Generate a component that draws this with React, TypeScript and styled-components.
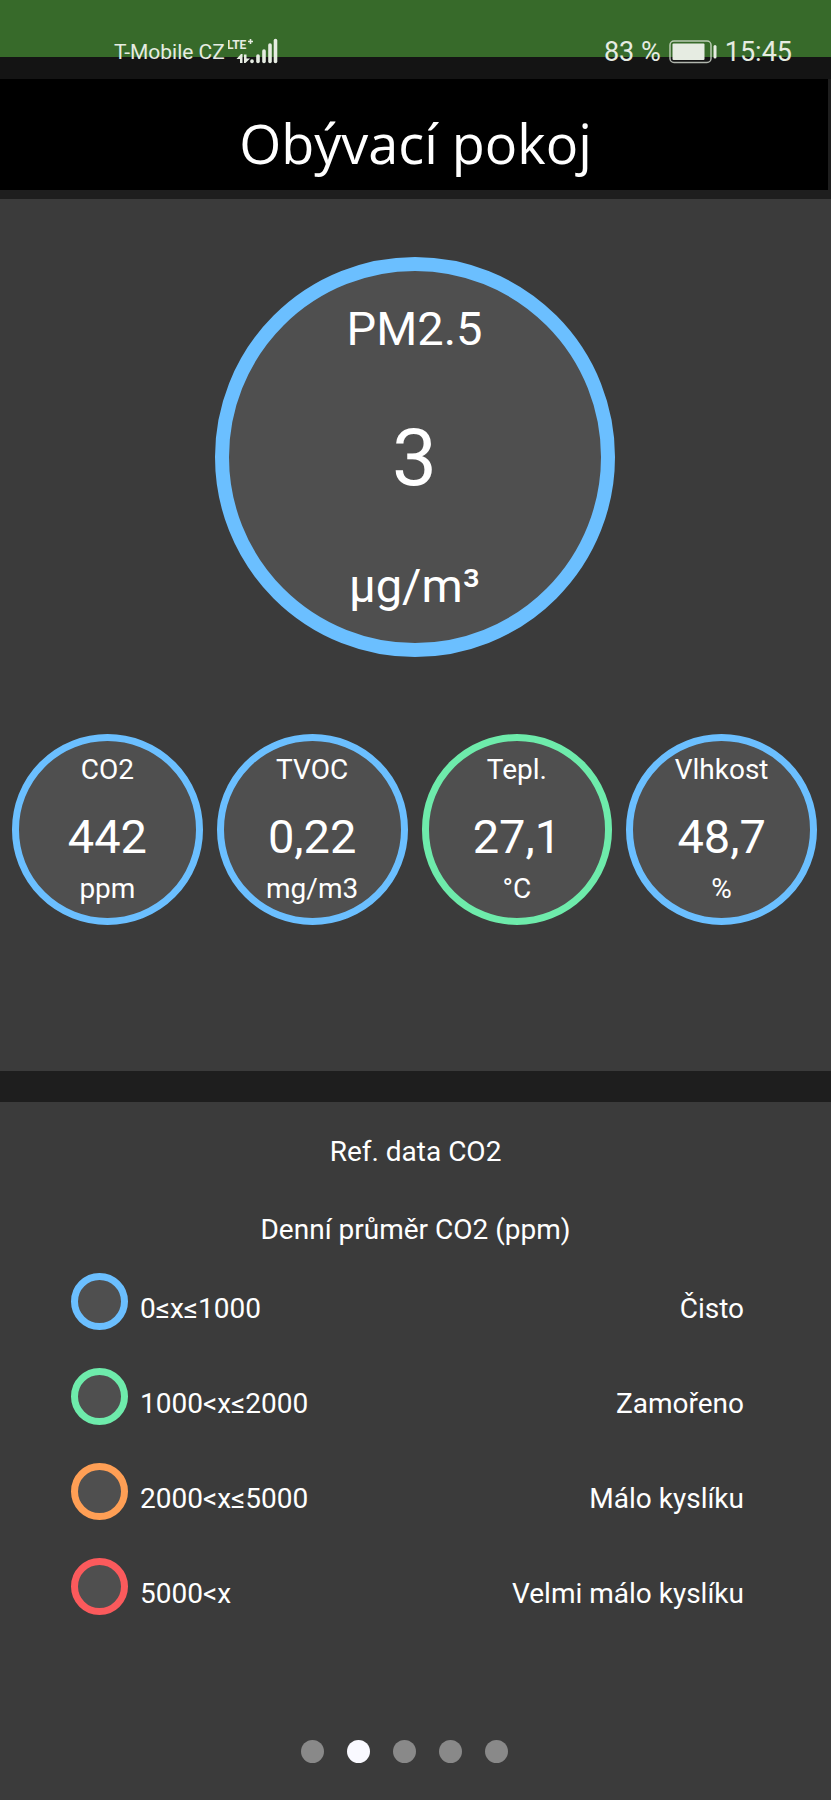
import React from "react";
import styled, { createGlobalStyle } from "styled-components";

const colors = {
  blue: "#6bbfff",
  green: "#6eebab",
  orange: "#ff9f55",
  red: "#fb5a5c",
  panel: "#3b3b3b",
  disc: "#4f4f4f",
  gap: "#1e1e1e",
};

const GlobalStyle = createGlobalStyle`
  *, *::before, *::after { box-sizing: border-box; }
  body {
    margin: 0;
    background: ${colors.panel};
    color: #fff;
    font-family: Roboto, "Noto Sans", sans-serif;
    font-size: 28px;
    line-height: 32px;
  }
`;

const Page = styled.div`
  display: flex;
  flex-direction: column;
  min-height: 100vh;
`;

const StatusBar = styled.header`
  display: flex;
  justify-content: space-between;
  align-items: flex-end;
  height: 79px;
  padding: 0 39px 11px 114px;
  background: linear-gradient(#376a2a 57px, #141414 57px);
  color: #e6ece2;
`;

const StatusGroup = styled.div`
  display: flex;
  align-items: center;
  gap: 8px;
  height: 32px;
  font-size: 27px;
`;

const Network = styled(StatusGroup)`
  gap: 3px;
  font-size: 21px;
`;

const SignalIcon = styled.svg`
  width: 50px;
  height: 28px;
  font-family: Roboto, sans-serif;
  font-size: 12px;
  font-weight: 700;
`;

const BatteryIcon = styled.svg`
  width: 48px;
  height: 24px;
`;

const TitleBar = styled.div`
  padding: 32px 0 15px 3px;
  border-right: 3px solid ${colors.gap};
  background: #000;
`;

const Title = styled.h1`
  margin: 0;
  font: 400 54px/64px "Open Sans", "Noto Sans", sans-serif;
  text-align: center;
`;

const Readings = styled.main`
  padding: 58px 14px 146px 12px;
  border-top: 9px solid ${colors.gap};
`;

const Gauge = styled.section<{ $color: string }>`
  display: flex;
  flex-direction: column;
  align-items: center;
  aspect-ratio: 1;
  padding-top: 13px;
  border: 7px solid ${(p) => p.$color};
  border-radius: 50%;
  background: ${colors.disc};
`;

const GaugeName = styled.h2`
  margin: 0;
  font: inherit;
`;

const GaugeValue = styled.div`
  margin: 23px 0 8px;
  font-size: 47px;
  line-height: 56px;
`;

const GaugeUnit = styled.div``;

const MainGauge = styled(Gauge)`
  width: 400px;
  margin: 0 auto 77px;
  padding-top: 30px;
  border-width: 14px;

  ${GaugeName}, ${GaugeUnit} {
    font-size: 47px;
    line-height: 56px;
  }

  ${GaugeValue} {
    margin: 53px 0 52px;
    font-size: 80px;
    line-height: 96px;
  }
`;

const GaugeRow = styled.div`
  display: grid;
  grid-template-columns: repeat(4, 1fr);
  gap: 14px;
`;

const Reference = styled.section`
  flex: 1;
  display: flex;
  flex-direction: column;
  padding: 34px 0 37px;
  border-top: 31px solid ${colors.gap};
`;

const ReferenceTitle = styled.h2`
  margin: 0 0 46px;
  font: inherit;
  text-align: center;
`;

const ReferenceSubtitle = styled.h3`
  margin: 0 0 27px;
  font: inherit;
  text-align: center;
`;

const Legend = styled.ul`
  display: grid;
  gap: 38px;
  margin: 0;
  padding: 0 87px 0 71px;
  list-style: none;
`;

const LegendItem = styled.li`
  display: grid;
  grid-template-columns: 57px 1fr auto;
  column-gap: 12px;
  align-items: end;
`;

const Swatch = styled.span<{ $color: string }>`
  width: 57px;
  height: 57px;
  border: 7px solid ${(p) => p.$color};
  border-radius: 50%;
  background: ${colors.disc};
`;

const LegendText = styled.span`
  padding-bottom: 5px;
`;

const Pager = styled.nav`
  display: flex;
  justify-content: center;
  margin-top: auto;
`;

const PageDot = styled.button<{ $active: boolean }>`
  width: 23px;
  height: 23px;
  margin: 0 23px 0 0;
  padding: 0;
  border: 0;
  border-radius: 50%;
  background: ${(p) => (p.$active ? "#f9f9ff" : "#898989")};
`;

const gauges = [
  { name: "CO2", value: "442", unit: "ppm", color: colors.blue },
  { name: "TVOC", value: "0,22", unit: "mg/m3", color: colors.blue },
  { name: "Tepl.", value: "27,1", unit: "°C", color: colors.green },
  { name: "Vlhkost", value: "48,7", unit: "%", color: colors.blue },
];

const levels = [
  { range: "0≤x≤1000", label: "Čisto", color: colors.blue },
  { range: "1000<x≤2000", label: "Zamořeno", color: colors.green },
  { range: "2000<x≤5000", label: "Málo kyslíku", color: colors.orange },
  { range: "5000<x", label: "Velmi málo kyslíku", color: colors.red },
];

const bars = [
  { x: 24, top: 22 },
  { x: 30, top: 17 },
  { x: 36, top: 12 },
  { x: 42, top: 6 },
  { x: 47.5, top: 1.5 },
];

export default function App() {
  return (
    <Page>
      <GlobalStyle />
      <StatusBar>
        <Network>
          <span>T-Mobile CZ</span>
          <SignalIcon viewBox="0 0 50 28" fill="currentColor" aria-hidden="true">
            <text x="-1" y="11">LTE</text>
            <path d="M22.500 1v5M20 3.500h5" stroke="currentColor" strokeWidth="1.6" />
            <path d="M8.500 21l4.500-5h1.500v9H12v-4zM16 16.500h2.500v4H22L17.500 25H16z" />
            {bars.map((b) => (
              <path
                key={b.x}
                d={`M${b.x} ${b.top + 1}V23.500`}
                stroke="currentColor"
                strokeWidth="3.6"
                strokeLinecap="round"
              />
            ))}
          </SignalIcon>
        </Network>
        <StatusGroup>
          <span>83 %</span>
          <BatteryIcon viewBox="0 0 48 24" fill="none" aria-hidden="true">
            <rect x="1" y="1" width="41" height="21.500" rx="4" stroke="currentColor" strokeOpacity="0.75" strokeWidth="1.500" />
            <rect x="3.500" y="3.500" width="32" height="16.500" rx="1" fill="currentColor" />
            <rect x="44.500" y="5" width="3" height="13.500" rx="1.500" fill="currentColor" />
          </BatteryIcon>
          <span>15:45</span>
        </StatusGroup>
      </StatusBar>

      <TitleBar>
        <Title>Obývací pokoj</Title>
      </TitleBar>

      <Readings>
        <MainGauge $color={colors.blue}>
          <GaugeName>PM2.5</GaugeName>
          <GaugeValue>3</GaugeValue>
          <GaugeUnit>µg/m³</GaugeUnit>
        </MainGauge>
        <GaugeRow>
          {gauges.map((g) => (
            <Gauge key={g.name} $color={g.color}>
              <GaugeName>{g.name}</GaugeName>
              <GaugeValue>{g.value}</GaugeValue>
              <GaugeUnit>{g.unit}</GaugeUnit>
            </Gauge>
          ))}
        </GaugeRow>
      </Readings>

      <Reference>
        <ReferenceTitle>Ref. data CO2</ReferenceTitle>
        <ReferenceSubtitle>Denní průměr CO2 (ppm)</ReferenceSubtitle>
        <Legend>
          {levels.map((l) => (
            <LegendItem key={l.range}>
              <Swatch $color={l.color} />
              <LegendText>{l.range}</LegendText>
              <LegendText>{l.label}</LegendText>
            </LegendItem>
          ))}
        </Legend>
        <Pager aria-label="Stránky">
          {[1, 2, 3, 4, 5].map((n) => (
            <PageDot
              key={n}
              type="button"
              $active={n === 2}
              aria-label={`Stránka ${n}`}
              aria-current={n === 2 ? "page" : undefined}
            />
          ))}
        </Pager>
      </Reference>
    </Page>
  );
}
